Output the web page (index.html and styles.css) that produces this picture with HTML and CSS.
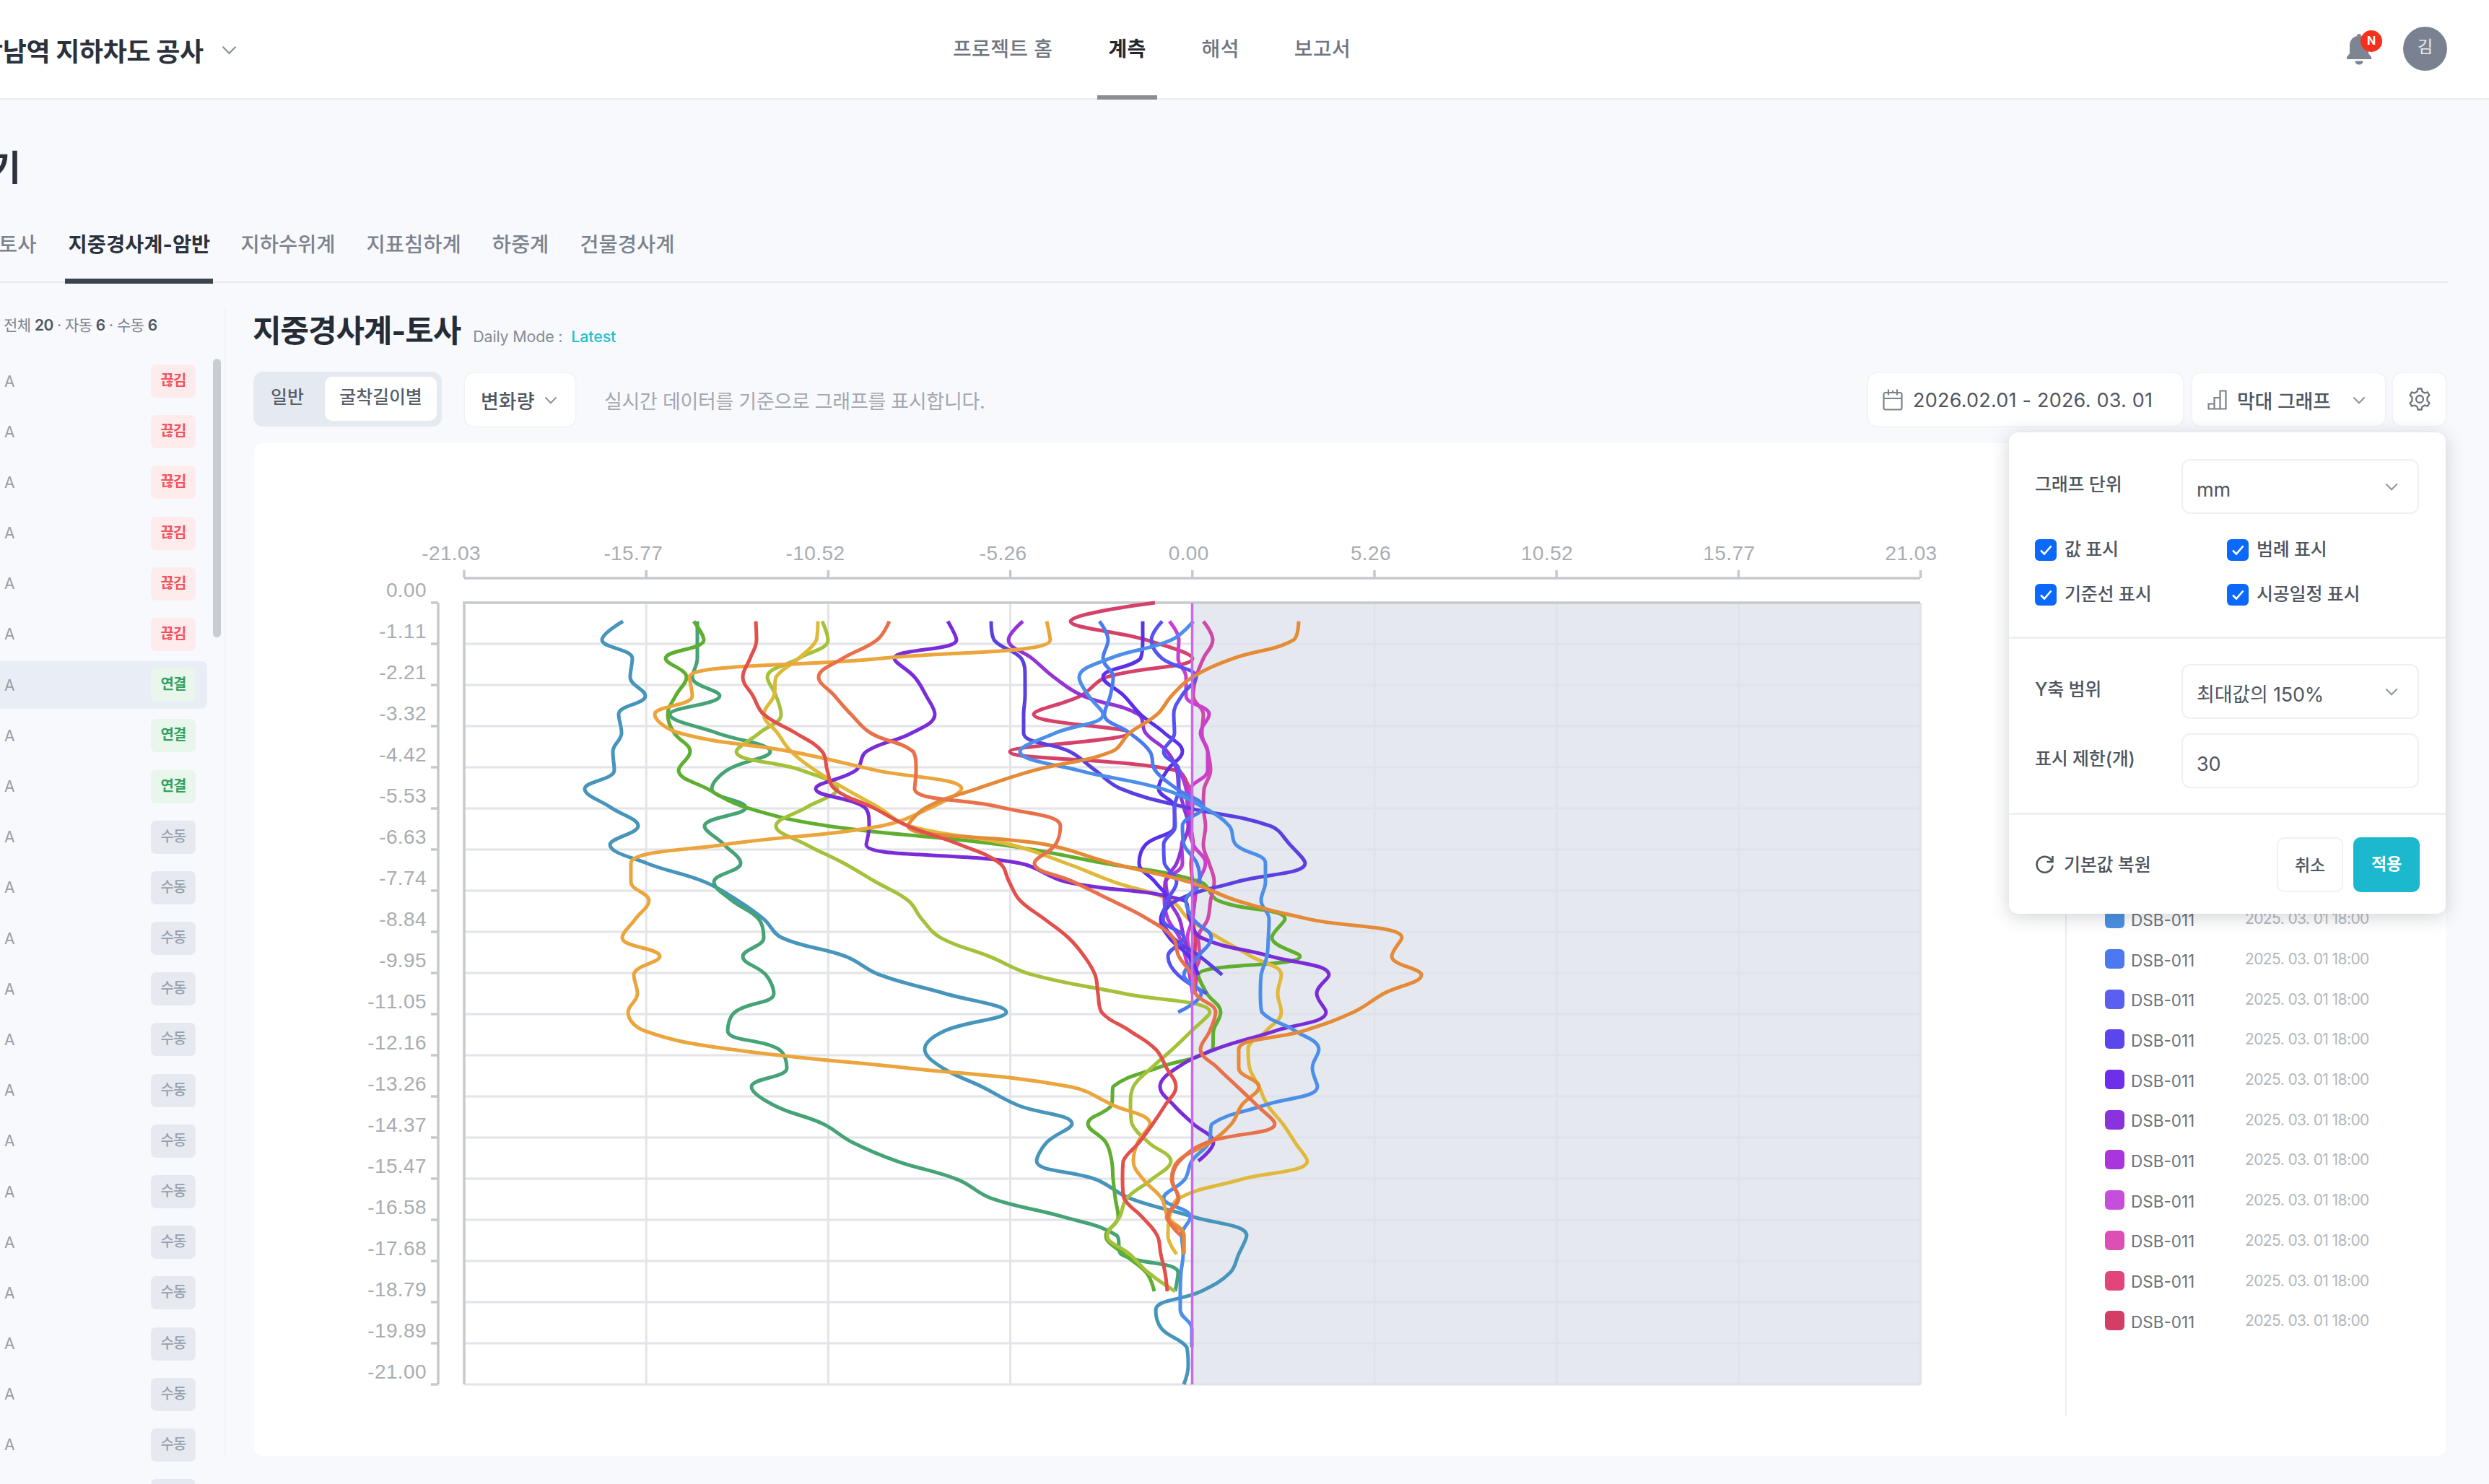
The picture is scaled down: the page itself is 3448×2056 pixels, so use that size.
FILE: index.html
```html
<!DOCTYPE html>
<html lang="ko">
<head>
<meta charset="utf-8">
<title>지중경사계</title>
<link rel="stylesheet" href="styles.css">
</head>
<body>
<svg class="defs" width="0" height="0">
  <symbol id="chev" viewBox="0 0 20 12"><path d="M1.5 1.5 10 10.2 18.5 1.5" fill="none" stroke="currentColor" stroke-width="2.2"/></symbol>
  <symbol id="check" viewBox="0 0 30 30"><path d="M8 15.5 13 20.5 22.5 9.5" fill="none" stroke="#fff" stroke-width="2.6"/></symbol>
</svg>
<header class="top">
  <div class="project"><span class="project-name">강남역 지하차도 공사</span><svg class="chev big"><use href="#chev"/></svg></div>
  <nav class="nav">
    <a class="nav-item">프로젝트 홈</a><a class="nav-item on">계측</a><a class="nav-item">해석</a><a class="nav-item">보고서</a>
  </nav>
  <div class="user">
    <div class="bell">
      <svg width="36" height="44" viewBox="0 0 36 44"><path d="M18 1c-2 0-3 1.300-3 3C8 5.500 5 11 5 18v10l-4 5v3h34v-3l-4-5V18c0-7-3-12.500-10-14 0-1.700-1-3-3-3z" fill="#7d8592"/><path d="M12.500 38.500h11c0 3-2.500 5-5.500 5s-5.500-2-5.500-5z" fill="#7d8592"/></svg>
      <span class="new">N</span>
    </div>
    <div class="avatar">김</div>
  </div>
</header>

<h1 class="title">기</h1>
<div class="tabs">
  <a class="tab">토사</a><a class="tab on">지중경사계-암반</a><a class="tab">지하수위계</a><a class="tab">지표침하계</a><a class="tab">하중계</a><a class="tab">건물경사계</a>
</div>

<div class="body">
  <aside class="side">
    <div class="count">전체 <b>20</b> · 자동 <b>6</b> · 수동 <b>6</b></div>
    <div class="scroll">
      <div class="list" id="list"></div>
      <div class="thumb"></div>
    </div>
  </aside>
  <main class="main">
    <div class="head"><h2>지중경사계-토사</h2><span class="mode">Daily Mode :</span><span class="latest">Latest</span></div>
    <div class="bar">
      <div class="seg"><span class="seg-item">일반</span><span class="seg-item on">굴착길이별</span></div>
      <div class="btn change"><span>변화량</span><svg class="chev"><use href="#chev"/></svg></div>
      <span class="desc">실시간 데이터를 기준으로 그래프를 표시합니다.</span>
      <div class="btn date">
        <svg width="28" height="30" viewBox="0 0 28 30" fill="none" stroke="#7b828b" stroke-width="2.200"><rect x="1.500" y="5" width="25" height="23.500" rx="2.500"/><path d="M1.500 13h25M8 0.500v8M20 0.500v8M14 2v4"/></svg>
        <span>2026.02.01 - 2026. 03. 01</span>
      </div>
      <div class="btn type">
        <svg width="27" height="28" viewBox="0 0 27 28" fill="none" stroke="#7b828b" stroke-width="2.200"><path d="M1.500 26.500v-7h8v7zM9.500 26.500V11h8v15.500zM17.500 26.500v-25h8v25z"/></svg>
        <span>막대 그래프</span><svg class="chev"><use href="#chev"/></svg>
      </div>
      <div class="btn gear">
        <svg width="30" height="32" viewBox="0 0 30 32" fill="none" stroke="#6d747d" stroke-width="2.300" stroke-linejoin="round"><path d="M12.500 1.500h5l1 4 3.500 2 4-1.200 2.500 4.400-3 2.800v5l3 2.800-2.500 4.400-4-1.200-3.500 2-1 4h-5l-1-4-3.500-2-4 1.200-2.500-4.400 3-2.800v-5l-3-2.800L4 6.300l4 1.200 3.500-2z"/><circle cx="15" cy="16" r="5"/></svg>
      </div>
    </div>
    <div class="card">
      <svg class="plot" id="plot" viewBox="352 614 2508 1403"></svg>
      <div class="legend" id="legend"></div>
    </div>

    <div class="pop">
      <div class="sec units">
        <div class="field"><label>그래프 단위</label><div class="input"><span>mm</span><svg class="chev"><use href="#chev"/></svg></div></div>
        <div class="checks">
          <div class="check"><svg class="box"><use href="#check"/></svg><span>값 표시</span></div>
          <div class="check"><svg class="box"><use href="#check"/></svg><span>범례 표시</span></div>
          <div class="check"><svg class="box"><use href="#check"/></svg><span>기준선 표시</span></div>
          <div class="check"><svg class="box"><use href="#check"/></svg><span>시공일정 표시</span></div>
        </div>
      </div>
      <div class="sec range">
        <div class="field"><label>Y축 범위</label><div class="input"><span>최대값의 150%</span><svg class="chev"><use href="#chev"/></svg></div></div>
        <div class="field"><label>표시 제한(개)</label><div class="input"><span>30</span></div></div>
      </div>
      <div class="foot">
        <svg width="27" height="27" viewBox="0 0 27 27" fill="none" stroke="#4d545c" stroke-width="2.500"><path d="M23.500 9A11 11 0 1 0 24.500 15"/><path d="M24.500 2v8h-8"/></svg>
        <span class="reset">기본값 복원</span>
        <span class="act cancel">취소</span><span class="act apply">적용</span>
      </div>
    </div>
  </main>
</div>
<script src="chart.js"></script>
</body>
</html>
```
FILE: styles.css
```css
* { box-sizing: border-box; }
html, body { margin: 0; height: 2056px; overflow: hidden; }
body { background: #f8f9fd; font-family: Inter, "Noto Sans CJK KR", sans-serif; color: #50565f; width: 3448px; }
.defs { position: absolute; }
.chev { width: 18px; height: 11px; color: #8d939b; flex: none; }
.chev.big { width: 21px; height: 13px; margin-left: 25px; }

.top { height: 138px; background: #fff; border-bottom: 2px solid #ebedf1; display: grid; grid-template-columns: 1320px 1fr auto; position: relative; }
.project { display: flex; align-items: center; margin-left: -29px; }
.project-name { font-size: 36px; font-weight: 700; color: #2c323c; letter-spacing: -0.400px; white-space: nowrap; line-height: 40px; padding-top: 5px; }
.nav { display: flex; gap: 64px; }
.nav-item { font-size: 28px; font-weight: 500; color: #6f7680; line-height: 136px; height: 138px; padding: 0 7px; white-space: nowrap; letter-spacing: 0.350px; margin: 0 -1px; }
.nav-item:first-child { margin-left: -7px; }
.nav-item.on { color: #23282f; font-weight: 700; padding: 0 15px; margin: 0 -8px; border-bottom: 6px solid #8a8e92; }
.user { display: flex; align-items: flex-start; padding: 37px 58px 0 0; gap: 43px; }
.bell { position: relative; padding-top: 9px; width: 36px; }
.new { position: absolute; left: 20px; top: 5px; width: 30px; height: 30px; border-radius: 50%; background: #f5301c; color: #fff; font-size: 16px; font-weight: 700; line-height: 29px; text-align: center; }
.avatar { width: 61px; height: 61px; border-radius: 50%; background: #7a8291; color: #e8eaee; font-size: 23px; line-height: 56px; text-align: center; }

.title { margin: 65px 0 0 -16px; font-size: 49px; line-height: 60px; font-weight: 600; color: #2c323c; height: 60px; }
.tabs { margin: 35px 57px 0 0; height: 94px; display: flex; border-bottom: 2px solid #e8eaef; }
.tab { font-size: 28.500px; font-weight: 500; color: #7c838d; height: 95px; line-height: 81px; white-space: nowrap; letter-spacing: 0; margin-right: 43px; }
.tab:first-child { margin: 0 40px 0 -2px; }
.tab.on { font-weight: 700; color: #2c323c; border-bottom: 7px solid #3c424f; padding: 0 4px; width: 205px; margin-right: 38px; letter-spacing: 0; }

.body { display: flex; height: 1664px; }
.side { width: 313px; flex: none; margin-top: 36px; height: 1590px; border-right: 2px solid #f0f2f6; }
.count { font-size: 21px; line-height: 46px; height: 63px; padding-left: 5px; color: #7c838d; white-space: nowrap; letter-spacing: -0.550px; }
.count b { font-weight: 600; color: #50565f; }
.scroll { display: flex; align-items: flex-start; }
.list { width: 287px; display: flex; flex-direction: column; gap: 4.200px; margin-top: 4px; }
.row { height: 66px; flex: none; display: flex; align-items: center; justify-content: space-between; padding: 0 16px 0 6px; font-size: 21px; color: #979da6; border-radius: 0 8px 8px 0; }
.row.sel { background: #e9edf5; }
.badge { width: 62px; height: 46px; border-radius: 7px; font-size: 20px; font-weight: 500; line-height: 44px; text-align: center; letter-spacing: -1px; }
.off { background: #feeced; color: #f4525c; font-weight: 700; }
.live { background: #e8f6ec; color: #33a062; font-weight: 700; }
.manual { background: #e6eaf0; color: #98a0ae; }
.thumb { width: 11px; height: 386px; margin: 6px 0 0 8px; border-radius: 6px; background: #c8ccd3; }

.main { flex: 1; margin: 0 60px 0 39px; position: relative; }
.head { height: 123px; display: flex; align-items: baseline; padding-top: 39px; }
.head h2 { margin: 0 0 0 -2px; font-size: 43px; line-height: 54px; font-weight: 700; color: #262c36; letter-spacing: -1.100px; }
.mode, .latest { font-size: 21.500px; color: #868c95; margin-left: 17px; letter-spacing: -0.200px; }
.latest { color: #26bfce; margin-left: 12px; font-weight: 500; }
.bar { height: 76px; display: flex; align-items: center; }
.seg { width: 261px; margin-left: -1px; height: 76px; border-radius: 13px; background: #e5eaf1; display: flex; padding: 7px; }
.seg-item { font-size: 25px; font-weight: 500; line-height: 57px; width: 92px; padding-left: 17px; color: #59606a; letter-spacing: -0.100px; white-space: nowrap; }
.seg-item.on { width: 155px; height: 61px; padding: 0; text-align: center; background: #fff; border-radius: 10px; }
.btn { height: 73px; border-radius: 12px; background: #fff; box-shadow: 0 0 3px rgba(60, 70, 90, .1); display: flex; align-items: center; font-size: 27px; font-weight: 500; color: #50575f; white-space: nowrap; padding-top: 2px; }
.change { width: 153px; margin-left: 32px; padding-left: 22px; gap: 13px; }
.desc { margin-left: 40px; flex: 1; font-size: 27px; color: #a2a7af; white-space: nowrap; padding-top: 3px; letter-spacing: -0.300px; }
.date { width: 436px; padding-left: 20px; gap: 14px; font-weight: 400; letter-spacing: 0.220px; }
.type { width: 267px; margin-left: 13px; padding-left: 21px; gap: 14px; letter-spacing: -0.300px; }
.type .chev { margin-left: 16px; }
.gear { width: 73px; margin-left: 11px; justify-content: center; padding: 0; }

.card { margin-top: 23px; height: 1403px; border-radius: 10px; background: #fff; display: flex; }
.plot { width: 2508px; height: 1403px; flex: none; }
.plot text { font: 28px "Liberation Sans", sans-serif; fill: #a9adb1; text-anchor: end; font-kerning: none; letter-spacing: 0.400px; }
.grid { stroke: #e2e4e8; stroke-width: 3; fill: none; }
.zone { fill: #dde2ea; fill-opacity: .76; }
.axis { stroke: #c6c9cc; stroke-width: 3.500; fill: none; }
.line { fill: none; stroke-width: 5; stroke-linecap: butt; stroke-linejoin: round; }
.legend { flex: 1; margin: 20px 0 55px 1px; border-left: 2px solid #eceef1; padding: 611px 0 0 53px; }
.item { height: 55.700px; display: flex; align-items: center; }
.dot { width: 27px; height: 27px; border-radius: 6px; margin-right: 9px; }
.name { width: 158px; font-size: 22.500px; color: #6b7178; padding-top: 3px; letter-spacing: 0; }
.time { font-size: 21px; color: #b3b7bc; letter-spacing: -0.600px; white-space: nowrap; }

.pop { position: absolute; right: 0; top: 207px; width: 605px; height: 667px; background: #fff; border-radius: 13px; box-shadow: 0 4px 26px rgba(40, 50, 70, .22); font-size: 25px; font-weight: 500; color: #50565f; letter-spacing: -0.200px; }
.sec { padding: 37px 37px 0 36px; border-bottom: 3px solid #eff0f2; }
.units { height: 286px; }
.range { height: 244px; padding-top: 35px; }
.field { display: flex; justify-content: space-between; height: 76px; line-height: 71px; margin-bottom: 20px; white-space: nowrap; }
.input { width: 329px; height: 76px; border: 2px solid #eff0f2; border-radius: 12px; display: flex; align-items: center; justify-content: space-between; padding: 0 27px 0 19px; font-size: 27px; font-weight: 400; }
.input span { padding-top: 8px; }
.checks { display: grid; grid-template-columns: 266px 1fr; row-gap: 32px; padding-top: 15px; }
.check { display: flex; align-items: center; gap: 11px; height: 30px; white-space: nowrap; }
.check span { margin-top: -6px; }
.box { width: 30px; height: 30px; border-radius: 6px; background: #0a69fb; }
.foot { display: flex; align-items: center; height: 137px; padding: 0 36px; }
.reset { flex: 1; padding-left: 13px; margin-top: -4px; }
.act { width: 92px; height: 76px; line-height: 75px; text-align: center; border-radius: 10px; font-size: 23px; }
.cancel { border: 2px solid #f0f1f3; margin-right: 14px; }
.apply { background: #1cb8cd; color: #fff; font-weight: 700; }
```
FILE: chart.js
```js
// sensor list
const states = [];
for (let i = 0; i < 23; i++) states.push(i < 6 ? ['off', '끊김'] : i < 9 ? ['live', '연결'] : ['manual', '수동']);
document.getElementById('list').innerHTML = states.map((s, i) =>
  `<div class="row${i === 6 ? ' sel' : ''}"><span>A</span><span class="badge ${s[0]}">${s[1]}</span></div>`).join('');

// legend
const swatches = ['#4a90e2', '#4c78f0', '#5a5ff2', '#5b45ec', '#6d2fec', '#8a33dc', '#a836dc', '#c54fdc', '#dc4fb4', '#e2447c', '#d43d66'];
document.getElementById('legend').innerHTML = swatches.map(c =>
  `<div class="item"><span class="dot" style="background:${c}"></span><span class="name">DSB-011</span><span class="time">2025. 03. 01 18:00</span></div>`).join('');

// plot: one sample every 0.5 m of depth
const TOP = 835, BOTTOM = 1918, STEP = (BOTTOM - TOP) / 42;
const series = [
  ['#4795bb', 1, [863,834,876,873,894,857,861,849,851,810,846,884,845,896,976,1022,1058,1083,1171,1219,1309,1394,1309,1281,1306,1360,1410,1485,1450,1436,1519,1565,1653,1727,1716,1704,1664,1601,1609,1644,1646,1640]],
  ['#45a376', 1, [966,966,966,959,997,928,993,1067,1007,986,1033,976,1003,1026,989,1014,1051,1058,1029,1061,1072,1018,1008,1079,1090,1041,1072,1140,1181,1242,1327,1373,1473,1547,1553,1632,1628]],
  ['#5fae2f', 1, [961,975,922,951,936,925,934,956,940,980,1033,1148,1387,1530,1663,1687,1780,1762,1801,1660,1672,1691,1681,1680,1603,1542,1540,1507,1532,1540,1542,1545,1549,1532,1557,1588,1599]],
  ['#a4c13a', 1, [1139,1147,1106,1063,1075,1082,1052,1020,1110,1160,1117,1075,1117,1169,1213,1258,1277,1303,1370,1431,1557,1676,1651,1624,1595,1570,1566,1568,1591,1622,1595,1561,1551,1534,1565,1591,1628]],
  ['#e0b93a', 1, [1133,1131,1106,1075,1072,1058,1077,1096,1129,1171,1217,1260,1400,1477,1543,1622,1647,1688,1733,1775,1770,1775,1754,1729,1731,1744,1756,1777,1794,1811,1718,1633,1620,1618,1630]],
  ['#d6416b', 0, [1600,1483,1588,1652,1533,1497,1432,1563,1399,1628,1648,1652,1650,1653,1650,1652,1655,1652,1656,1655,1657,1655]],
  ['#d048a8', 1, [1667,1680,1667,1657,1653,1667,1665,1673,1677,1668,1667,1670,1667,1675,1682,1677,1673,1660,1662,1655,1655]],
  ['#c93fd0', 1, [1620,1633,1632,1643,1643,1675,1663,1673,1673,1648,1647,1647,1653,1670,1660,1655,1652,1645,1650,1655,1655]],
  ['#b23ad6', 9, [1634,1643,1645,1648,1637,1638,1614,1613,1618,1634,1642,1648,1652]],
  ['#9434d4', 1, [1417,1397,1430,1460,1500,1577,1587,1617,1630,1633,1640,1646,1638,1630,1615,1620,1634,1640,1648,1652]],
  ['#7a2cd8', 1, [1313,1325,1239,1267,1283,1295,1263,1200,1186,1130,1198,1204,1200,1413,1477,1640,1648,1664,1760,1841,1824,1837,1767,1683,1630,1607,1626,1653,1681,1660]],
  ['#5b3fe0', 1, [1373,1377,1415,1420,1420,1418,1418,1482,1517,1553,1643,1760,1787,1808,1713,1630,1611,1625,1662,1693]],
  ['#5a30ea', 1, [1583,1583,1580,1528,1557,1580,1613,1638,1617,1605,1627,1627,1587,1578,1600,1617,1608,1620,1647,1660]],
  ['#5654f0', 1, [1610,1595,1610,1657,1637,1626,1627,1612,1633,1633,1627,1628,1612,1613,1630,1617,1611,1640,1618,1632,1672]],
  ['#4a7cee', 1, [1523,1535,1528,1542,1538,1530,1565,1593,1600,1630,1667,1638,1640,1658,1662,1643,1653,1678,1660,1640,1664,1632]],
  ['#4d8ee8', 1, [1653,1623,1537,1495,1508,1528,1462,1413,1493,1610,1667,1703,1712,1753,1753,1747,1758,1757,1755,1747,1746,1748,1794,1827,1818,1825,1752,1679,1675,1651,1641,1612,1649,1637,1639,1636,1635,1635,1651,1651]],
  ['#eba53c', 1, [1450,1455,1220,955,959,907,941,1096,1213,1332,1290,1220,1003,874,874,899,880,862,914,878,883,870,893,1013,1258,1482,1542,1593,1576,1570,1584,1609,1618,1640,1640]],
  ['#e58a36', 1, [1799,1792,1708,1652,1623,1603,1565,1540,1433,1353,1283,1258,1450,1540,1647,1713,1813,1942,1928,1969,1917,1875,1806,1716,1716,1744,1720,1706,1676,1632,1623,1633,1616,1640,1640]],
  ['#e8704a', 1, [1232,1215,1167,1134,1156,1179,1206,1265,1269,1267,1387,1469,1462,1433,1487,1540,1590,1625,1633,1651,1656,1684,1676,1663,1687,1714,1741,1766,1672,1634,1624,1632,1618,1636]],
  ['#e2504e', 1, [1047,1048,1039,1029,1043,1058,1102,1139,1146,1156,1209,1258,1330,1385,1398,1413,1447,1480,1502,1517,1521,1526,1565,1601,1616,1629,1614,1597,1578,1556,1555,1557,1582,1603,1608,1614,1617]]
];

const clamp = (v, a, b) => Math.max(Math.min(a, b), Math.min(Math.max(a, b), v));
function smooth(start, xs) {
  const p = xs.map((x, i) => [x, TOP + (start + i) * STEP]);
  const t = p.map((q, i) => {
    if (!i || i === p.length - 1) return null;
    const a = p[i - 1], b = p[i + 1];
    const la = Math.hypot(q[0] - a[0], q[1] - a[1]), lb = Math.hypot(b[0] - q[0], b[1] - q[1]);
    const s = 0.4, v = [b[0] - a[0], b[1] - a[1]];
    if ((q[0] - a[0]) * (b[0] - q[0]) <= 0) v[0] = 0;
    const ra = la / (la + lb), rb = 1 - ra;
    return [
      [clamp(q[0] - v[0] * s * ra, a[0], q[0]), clamp(q[1] - v[1] * s * ra, a[1], q[1])],
      [clamp(q[0] + v[0] * s * rb, q[0], b[0]), clamp(q[1] + v[1] * s * rb, q[1], b[1])]
    ];
  });
  let d = `M${p[0]}`;
  for (let i = 1; i < p.length; i++) d += `C${t[i - 1] ? t[i - 1][1] : p[i - 1]} ${t[i] ? t[i][0] : p[i]} ${p[i]}`;
  return d;
}

const xl = ['-21.03', '-15.77', '-10.52', '-5.26', '0.00', '5.26', '10.52', '15.77', '21.03'];
const yl = ['0.00', '-1.11', '-2.21', '-3.32', '-4.42', '-5.53', '-6.63', '-7.74', '-8.84', '-9.95', '-11.05', '-12.16', '-13.26', '-14.37', '-15.47', '-16.58', '-17.68', '-18.79', '-19.89', '-21.00'];
let out = '';
let grid = '', axis = 'M643 801H2660M607 835V1918M643 1918V835H2660';
xl.forEach((s, i) => {
  const x = 643 + i * 252.2;
  if (i) grid += `M${x} 835V1918`;
  axis += `M${x} 790V801`;
  out += `<text x="${x + 23}" y="776">${s}</text>`;
});
yl.forEach((s, i) => {
  const y = 835 + i * 57;
  if (i) grid += `M643 ${y}H2660`;
  axis += `M597 ${y}H607`;
  out += `<text x="591" y="${y - 8}">${s}</text>`;
});
out += `<path class="grid" d="${grid}"/><rect class="zone" x="1652" y="835" width="1009" height="1084"/><path class="axis" d="${axis}"/>`;
out += series.map(s => `<path class="line" stroke="${s[0]}" d="${smooth(s[1], s[2])}"/>`).join('');
out += '<path d="M1651.500 836V1918" stroke="#c86ae6" stroke-width="3.500"/>';
document.getElementById('plot').innerHTML = out;
```
